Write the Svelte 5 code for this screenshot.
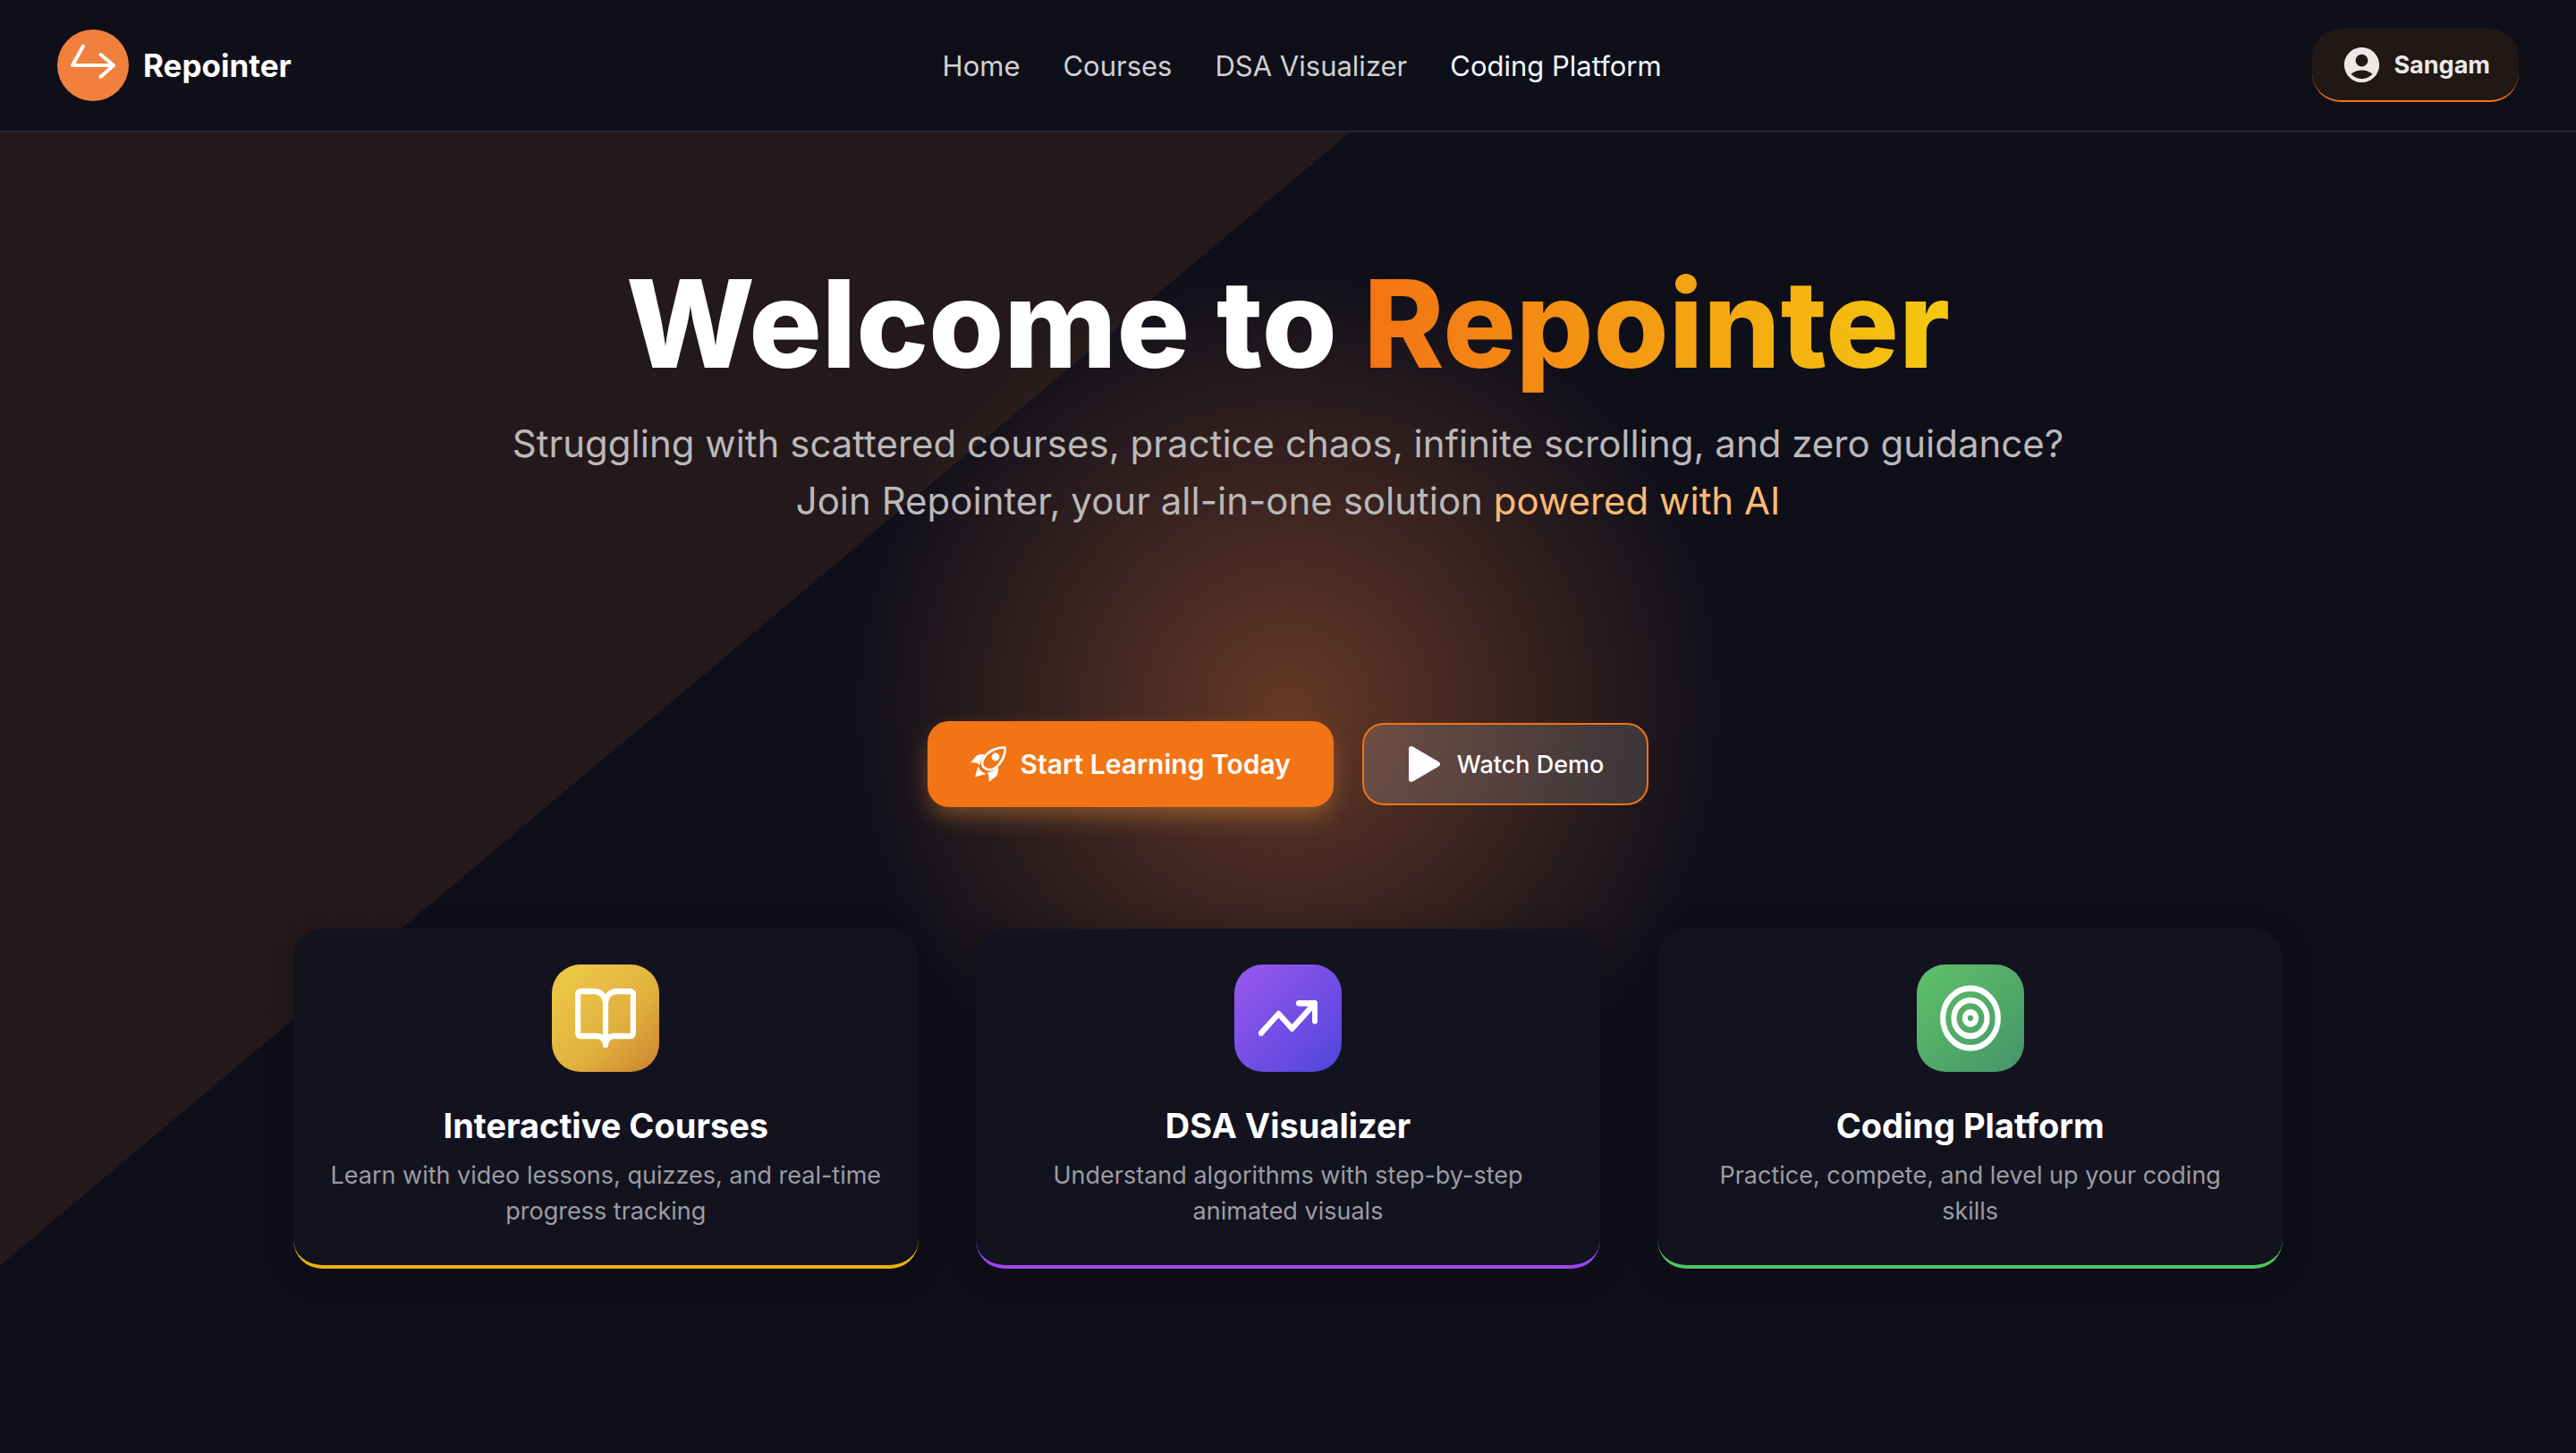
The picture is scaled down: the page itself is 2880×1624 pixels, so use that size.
<script>
  const links = ['Home', 'Courses', 'DSA Visualizer', 'Coding Platform'];
  const cards = [
    { kind: 'book', title: 'Interactive Courses', text: 'Learn with video lessons, quizzes, and real-time progress tracking' },
    { kind: 'trend', title: 'DSA Visualizer', text: 'Understand algorithms with step-by-step animated visuals' },
    { kind: 'target', title: 'Coding Platform', text: 'Practice, compete, and level up your coding skills' }
  ];
</script>

<div class="page">
  <header>
    <a class="brand" href="#top">
      <svg class="logo" viewBox="0 0 80 80" aria-hidden="true">
        <circle cx="40" cy="40" r="40" fill="#f0803c" />
        <path d="M29 18.500 17 40H63M48.500 28 63 40 48.500 53" fill="none" stroke="#fff" stroke-width="4" stroke-linecap="round" stroke-linejoin="round" />
      </svg>
      <span>Repointer</span>
    </a>
    <nav aria-label="Main">
      {#each links as link, i}
        <a href="#{link.toLowerCase().replace(' ', '-')}" class:active={i === 3}>{link}</a>
      {/each}
    </nav>
    <button class="user">
      <svg viewBox="0 0 24 24" aria-hidden="true"><path fill="currentColor" d="M12 2C6.480 2 2 6.480 2 12s4.480 10 10 10 10-4.480 10-10S17.520 2 12 2zm0 4c1.930 0 3.500 1.570 3.500 3.500S13.930 13 12 13s-3.500-1.570-3.500-3.500S10.070 6 12 6zm0 14c-2.030 0-4.430-.820-6.140-2.880C7.550 15.800 9.680 15 12 15s4.450.800 6.140 2.120C16.430 19.180 14.030 20 12 20z" /></svg>
      <span>Sangam</span>
    </button>
  </header>

  <main id="top">
    <h1>Welcome to <span>Repointer</span></h1>
    <p class="lead">Struggling with scattered courses, practice chaos, infinite scrolling, and zero guidance?<br />Join Repointer, your all-in-one solution <span>powered with AI</span></p>

    <div class="actions">
      <button class="primary">
        <svg viewBox="0 0 40 40" aria-hidden="true">
          <path d="M38.500 1.500C31 1 21 5 16.500 11c-3 4-4.500 8-2.500 11.500 2 3 6.500 4.500 10 3.500C31 24 39.500 12 38.500 1.500z" fill="none" stroke="#fff" stroke-width="2.600" stroke-linejoin="round" />
          <circle cx="28" cy="12" r="4.400" fill="#fff" />
          <path d="M16 9.500C12 8.500 8 9 5.500 12L0 18.500c4-.5 8 0 10.500 2.500C11 17 13 13 16 9.500zM31 23.500c0 4 0 7-2 10L20.500 40c.500-4 0-7-1.500-10.500C23 29 27 27 31 23.500zM8.500 22.500c1.500 4 4.500 7 9 8.500L5 34.500z" fill="#fff" />
        </svg>
        <span>Start Learning Today</span>
      </button>
      <button class="secondary">
        <svg viewBox="0 0 40 40" aria-hidden="true"><path d="M5 3v34L34 20z" fill="#fff" stroke="#fff" stroke-width="6" stroke-linejoin="round" /></svg>
        <span>Watch Demo</span>
      </button>
    </div>

    <div class="cards">
      {#each cards as card}
        <article class={card.kind}>
          <div class="tile">
            <svg viewBox="0 0 24 24" preserveAspectRatio="none" aria-hidden="true">
              {#if card.kind === 'book'}
                <path d="M12 7v14M3 18a1 1 0 0 1-1-1V4a1 1 0 0 1 1-1h5a4 4 0 0 1 4 4 4 4 0 0 1 4-4h5a1 1 0 0 1 1 1v13a1 1 0 0 1-1 1h-6a3 3 0 0 0-3 3 3 3 0 0 0-3-3z" />
              {:else if card.kind === 'trend'}
                <path d="M16 7h6v6M22 7l-8.500 8.500-5-5L2 17" />
              {:else}
                <circle cx="12" cy="12" r="10" /><circle cx="12" cy="12" r="6" /><circle cx="12" cy="12" r="2" />
              {/if}
            </svg>
          </div>
          <h2>{card.title}</h2>
          <p>{card.text}</p>
        </article>
      {/each}
    </div>
  </main>
</div>

<style>
  :global(body) { margin: 0; background: #0f0f1a; }
  * { box-sizing: border-box; }
  .page {
    min-height: 100vh;
    color: #fff;
    font-family: Inter, "Liberation Sans", sans-serif;
    background:
      radial-gradient(circle 496px at 50% 792px, rgba(255, 130, 60, 0.36), rgba(255, 130, 60, 0)),
      linear-gradient(140deg, rgba(240, 125, 40, 0.09) 35%, transparent 35%),
      #0f0f1a;
  }
  a { color: inherit; text-decoration: none; }
  button { font: inherit; color: inherit; border: 0; cursor: pointer; display: flex; align-items: center; }
  header {
    display: flex;
    justify-content: space-between;
    align-items: center;
    height: 148px;
    padding: 0 64px;
    background: #0f0f1a;
    border-bottom: 2px solid #272731;
  }
  .brand { display: flex; align-items: center; gap: 16px; font-size: 35px; font-weight: 700; }
  .logo { width: 80px; height: 80px; }
  nav { display: flex; gap: 48px; font-size: 31px; color: #d1d0d0; }
  .active { color: #f0f9ff; }
  .user {
    gap: 12px;
    height: 82px;
    padding: 0 32px;
    border-bottom: 2px solid #f97316;
    border-radius: 32px;
    background: #201815;
    color: #ebe9e8;
    font-size: 27px;
    font-weight: 700;
  }
  .user svg { width: 47px; height: 47px; }
  main { display: flex; flex-direction: column; align-items: center; padding: 142px 40px 80px; }
  h1 { margin: 0; font-size: 136px; line-height: 144px; font-weight: 800; }
  h1 span {
    color: transparent;
    background: linear-gradient(90deg, #f37314, #f5c90f);
    -webkit-background-clip: text;
    background-clip: text;
  }
  .lead { margin: 30px 0 0; font-size: 42px; line-height: 64px; text-align: center; color: #bbb8b9; }
  .lead span { color: #fdba74; }
  .actions { display: flex; align-items: center; gap: 32px; margin-top: 214px; }
  .primary {
    gap: 16px;
    height: 96px;
    padding: 0 48px;
    border-radius: 24px;
    background: #f37415;
    box-shadow: 0 12px 28px -4px rgba(249, 150, 60, 0.45);
    font-size: 30px;
    font-weight: 600;
  }
  .secondary {
    gap: 16px;
    height: 92px;
    padding: 0 48px;
    border: 2px solid #f37415;
    border-radius: 24px;
    background: linear-gradient(90deg, rgba(255, 255, 255, 0.14), rgba(255, 255, 255, 0.13));
    font-size: 27px;
    font-weight: 500;
  }
  .actions svg { width: 40px; height: 40px; }
  .cards { display: grid; grid-template-columns: repeat(3, 1fr); gap: 64px; width: 100%; max-width: 2224px; margin-top: 136px; }
  article {
    display: flex;
    flex-direction: column;
    align-items: center;
    padding: 40px;
    border-bottom: 4px solid;
    border-radius: 32px;
    background: #13131f;
    box-shadow: 0 8px 32px rgba(8, 8, 16, 0.25);
    text-align: center;
  }
  .tile { display: grid; place-items: center; width: 120px; height: 120px; border-radius: 32px; }
  .tile svg { width: 74px; height: 80px; fill: none; stroke: #fff; stroke-width: 2; stroke-linecap: round; stroke-linejoin: round; }
  .book { border-color: #eab308; }
  .trend { border-color: #a045f5; }
  .target { border-color: #4dc65c; }
  .book .tile { background: linear-gradient(135deg, #efcc48, #e0b03e 60%, #cd822e); }
  .trend .tile { background: linear-gradient(135deg, #9a58ee, #5045dc); }
  .trend .tile svg { width: 72px; }
  .target .tile { background: linear-gradient(135deg, #5fc168, #459569); }
  h2 { margin: 36px 0 0; font-size: 38px; line-height: 48px; font-weight: 700; }
  article p { margin: 12px 0 0; font-size: 27px; line-height: 40px; color: #9c9ca1; }
</style>
